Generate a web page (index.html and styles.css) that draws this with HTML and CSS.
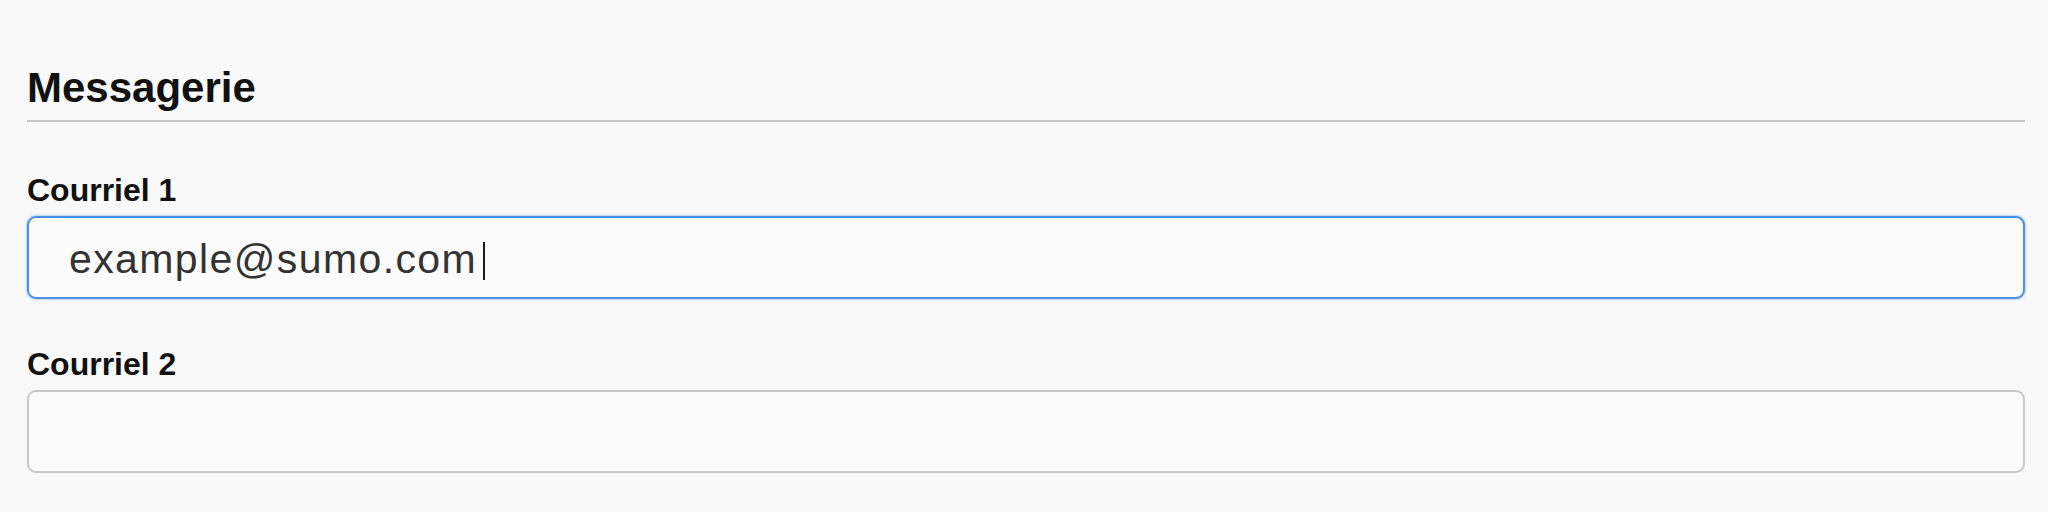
FILE: index.html
```html
<!DOCTYPE html>
<html lang="fr">
<head>
<meta charset="utf-8">
<title>Messagerie</title>
<link rel="stylesheet" href="styles.css">
</head>
<body>
<section class="panel">
  <h2 class="panel-title">Messagerie</h2>
  <div class="field field-first">
    <label class="field-label">Courriel 1</label>
    <div class="text-input is-focused" role="textbox"><span class="value">example@sumo.com</span><span class="caret"></span></div>
  </div>
  <div class="field">
    <label class="field-label">Courriel 2</label>
    <div class="text-input" role="textbox"></div>
  </div>
</section>
</body>
</html>
```
FILE: styles.css
```css
html, body {
  margin: 0;
  padding: 0;
  background: #f9f9f9;
}
body {
  font-family: "Liberation Sans", Arial, sans-serif;
  color: #111;
}
.panel {
  padding: 64px 23px 0 27px;
}
.panel-title {
  margin: 0;
  font-size: 42px;
  font-weight: 700;
  line-height: 48px;
  padding-bottom: 8px;
  border-bottom: 2px solid #c6c6c6;
  color: #111;
}
.field {
  display: flex;
  flex-direction: column;
  gap: 8px;
  margin-top: 47px;
}
.field-first {
  margin-top: 50px;
}
.field-label {
  font-size: 32px;
  font-weight: 700;
  line-height: 36px;
  color: #111;
}
.text-input {
  box-sizing: border-box;
  height: 83px;
  border: 2px solid #c8c8c8;
  border-radius: 9px;
  background: #fbfbfb;
  padding: 4px 0 0 40px;
  font-size: 41px;
  line-height: 75px;
  letter-spacing: 1.4px;
  color: #333;
  white-space: nowrap;
}
.text-input.is-focused {
  border-color: #4b8fe2;
  box-shadow: 0 0 2px 1px rgba(75, 143, 226, 0.35);
}
.caret {
  display: inline-block;
  width: 2px;
  height: 38px;
  margin-left: 6px;
  vertical-align: -7px;
  background: #1a1a1a;
}
```
